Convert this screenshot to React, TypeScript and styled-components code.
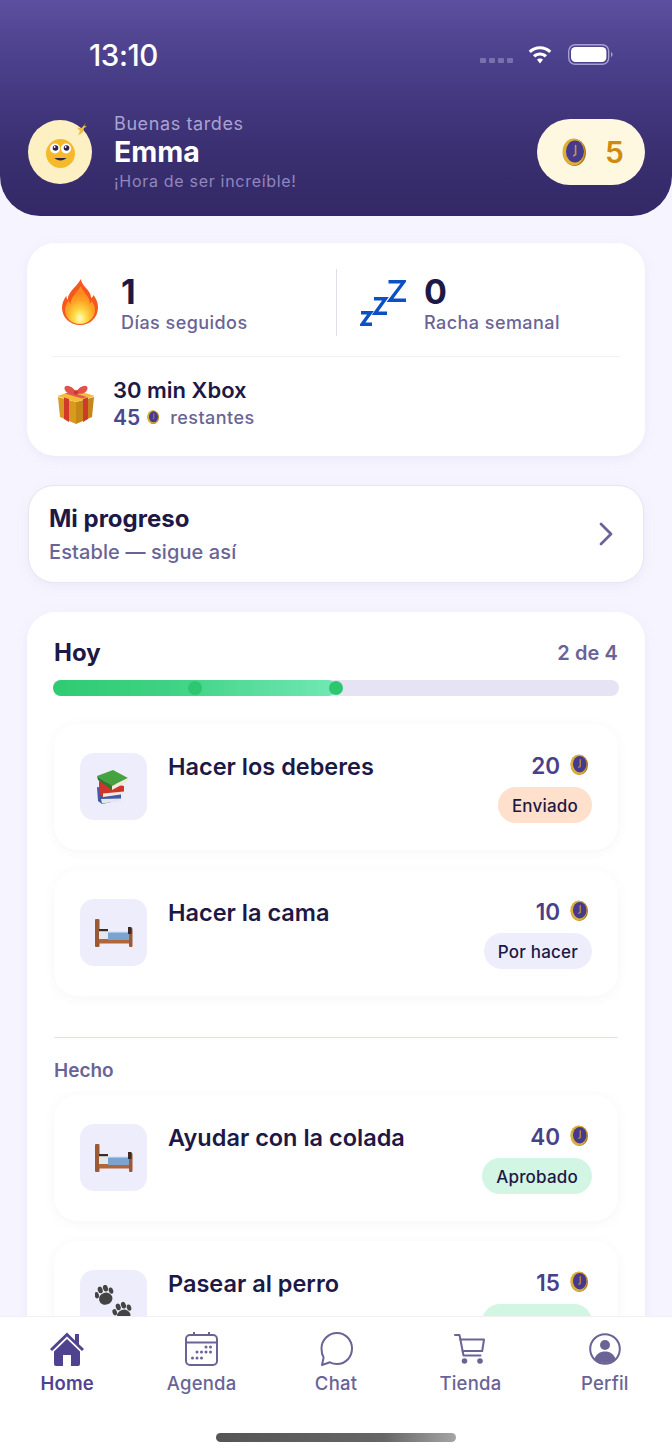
import React from "react";
import styled, { createGlobalStyle } from "styled-components";

const GlobalStyle = createGlobalStyle`
    html, body {
        margin: 0;
        padding: 0;
        background: #f6f5ff;
    }
    body {
        font-family: "Inter", "Noto Sans", sans-serif;
        color: #1d1845;
    }
`;

const Screen = styled.div`
    width: 672px;
    height: 1454px;
    display: flex;
    flex-direction: column;
    overflow: hidden;
    background: #f6f5ff;
`;

const Main = styled.div`
    flex: 1;
    min-height: 0;
    overflow: hidden;
`;

const Header = styled.header`
    height: 216px;
    box-sizing: border-box;
    padding-top: 34px;
    border-radius: 0 0 40px 40px;
    background: linear-gradient(180deg, #5c4f9f 0%, #4a3f8a 30%, #3a2f70 70%, #342966 100%);
`;

const StatusBar = styled.div`
    height: 40px;
    display: flex;
    align-items: center;
    justify-content: space-between;
    padding: 0 59px 0 89px;
`;

const Clock = styled.span`
    font-size: 29.5px;
    font-weight: 500;
    letter-spacing: -0.4px;
    padding-top: 1px;
    color: #fff;
`;

const StatusIcons = styled.div`
    display: flex;
    align-items: center;
`;

const SignalDots = styled.div`
    display: flex;
    gap: 3px;
    margin: 12px 14px 0 0;
`;

const SignalDot = styled.i`
    width: 6px;
    height: 5px;
    border-radius: 1px;
    background: #7a70ae;
`;

const Profile = styled.div`
    height: 80px;
    margin-top: 38px;
    padding: 0 27px 0 28px;
    display: flex;
    align-items: center;
`;

const Avatar = styled.div`
    width: 64px;
    height: 64px;
    margin-right: 22px;
`;

const Greeting = styled.div`
    flex: 1;
    display: flex;
    flex-direction: column;
    padding-top: 1px;
`;

const Hello = styled.span`
    font-size: 18px;
    line-height: 22px;
    letter-spacing: 0.6px;
    color: #a9a2d2;
`;

const Name = styled.span`
    font-size: 28.5px;
    line-height: 34px;
    font-weight: 700;
    color: #fff;
`;

const Tagline = styled.span`
    font-size: 16px;
    line-height: 24px;
    letter-spacing: 0.7px;
    color: #8f87bd;
`;

const CoinPill = styled.div`
    width: 108px;
    height: 66px;
    box-sizing: border-box;
    padding-left: 25px;
    display: flex;
    align-items: center;
    gap: 19px;
    border-radius: 33px;
    background: #fff8e1;
`;

const PillValue = styled.span`
    font-size: 30px;
    font-weight: 600;
    color: #d08a10;
`;

const Body = styled.div`
    padding: 27px 27px 0;
    display: flex;
    flex-direction: column;
    gap: 29px;
`;

const Card = styled.section`
    background: #fff;
    border-radius: 28px;
    box-shadow: 0 3px 14px rgba(80, 70, 160, 0.07);
`;

const StatsCard = styled(Card)`
    height: 213px;
    box-sizing: border-box;
    padding: 26px 25px 0;
`;

const StatsRow = styled.div`
    display: flex;
    height: 67px;
    padding-bottom: 20px;
    border-bottom: 1px solid #f1f0f8;
`;

const Stat = styled.div<{ $divided?: boolean }>`
    flex: ${(p) => (p.$divided ? "1" : "none")};
    width: ${(p) => (p.$divided ? "auto" : "284px")};
    box-sizing: border-box;
    display: flex;
    align-items: flex-start;
    gap: ${(p) => (p.$divided ? "18px" : "23px")};
    padding-left: ${(p) => (p.$divided ? "23px" : "10px")};
    border-left: ${(p) => (p.$divided ? "1px solid #dfdeeb" : "none")};
    svg {
        margin-top: 10px;
    }
`;

const StatText = styled.div`
    display: flex;
    flex-direction: column;
    padding-top: 3px;
`;

const StatValue = styled.span`
    font-size: 34px;
    line-height: 39px;
    font-weight: 700;
    color: #1d1845;
`;

const StatLabel = styled.span`
    font-size: 18px;
    line-height: 24px;
    font-weight: 500;
    letter-spacing: 0.45px;
    color: #6a6496;
`;

const RewardRow = styled.div`
    display: flex;
    align-items: center;
    gap: 17px;
    padding: 22px 0 0 4px;
`;

const RewardText = styled.div`
    display: flex;
    flex-direction: column;
    gap: 4px;
`;

const RewardTitle = styled.span`
    font-size: 22px;
    line-height: 22px;
    font-weight: 600;
    color: #1d1845;
`;

const RewardSub = styled.div`
    display: flex;
    align-items: center;
    height: 24px;
`;

const RewardCount = styled.span`
    font-size: 21px;
    font-weight: 600;
    color: #4f4690;
    margin-right: 7px;
`;

const RewardLeft = styled.span`
    font-size: 18px;
    font-weight: 500;
    letter-spacing: 0.45px;
    color: #6a6496;
    margin-left: 11px;
`;

const ProgressCard = styled(Card)`
    height: 98px;
    box-sizing: border-box;
    margin: 0 1px;
    padding: 0 30px 0 20px;
    display: flex;
    align-items: center;
    justify-content: space-between;
    border: 1px solid #e6e5f1;
    border-radius: 26px;
`;

const ProgressText = styled.div`
    display: flex;
    flex-direction: column;
    gap: 6px;
    padding-top: 1px;
`;

const ProgressTitle = styled.span`
    font-size: 24px;
    line-height: 28px;
    font-weight: 700;
    color: #1d1845;
`;

const ProgressSub = styled.span`
    font-size: 20px;
    line-height: 26px;
    font-weight: 500;
    letter-spacing: 0.1px;
    color: #6a6496;
`;

const TodayCard = styled(Card)`
    padding: 26px 27px 40px;
    height: 900px;
    box-sizing: border-box;
`;

const TodayHead = styled.div`
    display: flex;
    align-items: center;
    justify-content: space-between;
    height: 28px;
`;

const TodayTitle = styled.h2`
    margin: 0;
    font-size: 24px;
    font-weight: 700;
    color: #1d1845;
`;

const TodayCount = styled.span`
    font-size: 20px;
    font-weight: 600;
    letter-spacing: 0.1px;
    padding-top: 1px;
    color: #6a6496;
`;

const Bar = styled.div`
    position: relative;
    height: 16px;
    margin: 14px -1px 28px;
    border-radius: 8px;
    background: #e6e4f4;
`;

const BarFill = styled.div`
    height: 100%;
    border-radius: 8px;
    background: linear-gradient(90deg, #2fcb72 0%, #3dd283 40%, #72e8b4 100%);
`;

const BarDot = styled.i`
    position: absolute;
    top: 1px;
    width: 14px;
    height: 14px;
    margin-left: -7px;
    border-radius: 50%;
    background: #2cc76e;
`;

const Tasks = styled.div`
    display: flex;
    flex-direction: column;
    gap: 20px;
`;

const TaskRow = styled.div`
    height: 126px;
    box-sizing: border-box;
    padding: 29px 26px;
    display: flex;
    align-items: flex-start;
    border-radius: 24px;
    background: #fff;
    box-shadow: 0 2px 12px rgba(80, 70, 160, 0.05);
`;

const TaskIcon = styled.div`
    width: 67px;
    height: 67px;
    flex: none;
    display: flex;
    align-items: center;
    justify-content: center;
    border-radius: 14px;
    background: #eeedfc;
`;

const TaskTitle = styled.span`
    flex: 1;
    margin-left: 21px;
    padding-top: 1px;
    font-size: 23.5px;
    line-height: 26px;
    font-weight: 600;
    color: #1d1845;
`;

const TaskMeta = styled.div`
    display: flex;
    flex-direction: column;
    align-items: flex-end;
    gap: 10px;
`;

const TaskPoints = styled.div`
    height: 24px;
    display: flex;
    align-items: center;
    gap: 10px;
    padding-right: 4px;
    font-size: 22.5px;
    font-weight: 600;
    color: #4a4088;
`;

const tones = {
    sent: "#ffe0cc",
    todo: "#eeedfc",
    done: "#d3f5e3",
};

const Badge = styled.span<{ $tone: keyof typeof tones }>`
    height: 36px;
    box-sizing: border-box;
    padding: 2px 14px 0;
    display: flex;
    align-items: center;
    border-radius: 18px;
    font-size: 17px;
    font-weight: 500;
    letter-spacing: 0.2px;
    color: #1d1845;
    background: ${(p) => tones[p.$tone]};
`;

const Divider = styled.hr`
    margin: 41px 0 20px;
    border: none;
    border-top: 1px solid #dfdeeb;
`;

const SectionLabel = styled.div`
    font-size: 19px;
    line-height: 24px;
    font-weight: 600;
    padding-top: 1px;
    color: #6a6496;
    margin-bottom: 12px;
`;

const TabBar = styled.nav`
    height: 138px;
    flex: none;
    box-sizing: border-box;
    position: relative;
    z-index: 1;
    padding-top: 15px;
    display: flex;
    align-items: flex-start;
    background: #fff;
    border-top: 1px solid #f0eff6;
`;

const Tab = styled.div<{ $active?: boolean }>`
    flex: 1;
    display: flex;
    flex-direction: column;
    align-items: center;
    color: ${(p) => (p.$active ? "#4f4390" : "#6a6496")};
    font-size: 18.5px;
    line-height: 24px;
    font-weight: ${(p) => (p.$active ? 600 : 500)};
    letter-spacing: 0.2px;
    svg {
        height: 34px;
        margin-bottom: 5px;
    }
`;

const HomeIndicator = styled.div`
    position: absolute;
    left: 216px;
    top: 116px;
    width: 240px;
    height: 9px;
    border-radius: 5px;
    background: linear-gradient(90deg, #555 0%, #666 70%, #a5a5a5 100%);
`;

function Coin({ size = 24 }: { size?: number }) {
    return (
        <svg width={size} height={size * 1.17} viewBox="0 0 24 28">
            <ellipse cx="12.500" cy="14.500" rx="11.500" ry="13.500" fill="#a77a18" />
            <ellipse cx="11.500" cy="14" rx="11" ry="13.500" fill="#dcae3a" />
            <ellipse cx="13" cy="13.500" rx="9" ry="11" fill="#463a8e" />
            <path d="M13.600 7.500v9l-1.800 1.200" stroke="#c9963a" strokeWidth="1.600" fill="none" strokeLinecap="round" />
        </svg>
    );
}

function Wifi() {
    return (
        <svg width="26" height="22" viewBox="0 0 26 22">
            <path d="M13 3.200c4.400 0 8.400 1.700 11.300 4.500L22.200 10c-2.400-2.300-5.600-3.700-9.200-3.700S6.200 7.700 3.800 10L1.700 7.700C4.600 4.900 8.600 3.200 13 3.200z" fill="#fff" />
            <path d="M13 9.400c2.700 0 5.100 1 7 2.800l-2.200 2.300c-1.300-1.200-3-2-4.800-2s-3.500.8-4.800 2L6 12.200c1.900-1.800 4.300-2.800 7-2.800z" fill="#fff" />
            <path d="M13 15.400c1.200 0 2.300.5 3.100 1.200L13 20.400l-3.100-3.800c.8-.7 1.900-1.200 3.100-1.200z" fill="#fff" />
        </svg>
    );
}

function Battery() {
    return (
        <svg width="45" height="21" viewBox="0 0 45 21" style={{ marginLeft: 15 }}>
            <rect x="0.700" y="0.700" width="40" height="19.600" rx="6.500" fill="none" stroke="#a79fd0" strokeWidth="1.400" />
            <rect x="3" y="3" width="35.400" height="15" rx="4.500" fill="#fff" />
            <path d="M43 8v5c1-.4 1.600-1.400 1.600-2.500S44 8.400 43 8z" fill="#a79fd0" />
        </svg>
    );
}

function Smiley() {
    return (
        <svg width="64" height="64" viewBox="0 0 64 64">
            <circle cx="32" cy="32" r="32" fill="#fdf1c4" />
            <circle cx="32.500" cy="33.500" r="14.500" fill="#f6b92c" />
            <circle cx="27" cy="28.500" r="5" fill="#fff" />
            <circle cx="38" cy="28.500" r="5" fill="#fff" />
            <circle cx="27.500" cy="28" r="2.800" fill="#2b2450" />
            <circle cx="38.500" cy="28" r="2.800" fill="#2b2450" />
            <circle cx="26.600" cy="27" r="0.900" fill="#fff" />
            <circle cx="37.600" cy="27" r="0.900" fill="#fff" />
            <path d="M26.500 38c3 3.200 9 3.200 12 0z" fill="#2b2450" />
            <path d="M58 3l-4.500 5 -4.500-.2 3 3.200-2 4.500 5-3.200 1-4.300 3-1.500-2.700-.6z" fill="#edbd45" />
        </svg>
    );
}

function Flame() {
    return (
        <svg width="36" height="46" viewBox="0 0 36 46">
            <defs>
                <radialGradient id="flameCore" cx="50%" cy="85%" r="65%">
                    <stop offset="0%" stopColor="#fffbd0" />
                    <stop offset="30%" stopColor="#ffdf4a" />
                    <stop offset="70%" stopColor="#ffa726" />
                    <stop offset="100%" stopColor="#ff8a1e" />
                </radialGradient>
            </defs>
            <path
                d="M19 0c.5 5 4.500 8 7.500 12 1.600 2.200 2.500 4.500 2.700 7 1.200-.6 1.900-1.500 2.200-3 2.800 3.500 4.600 7.700 4.600 12.200C36 38.500 28 46 18 46S0 38.500 0 28.500c0-4.500 2-8.500 4.500-12-.2 1.700.1 3 1.100 4.300C6 12.500 14.500 8 19 0z"
                fill="#f4581f"
            />
            <path
                d="M19 7c1 4.500 5 7.500 7.500 12 1 2 1.300 3.800 1.200 5.500 1-.6 1.700-1.300 2.100-2.400 1.800 2.400 3.200 5.400 3.200 8.400C33 38.800 26.300 45 18 45S3 38.800 3 31c0-4 1.800-7 4-9.500.1 1.500.5 2.600 1.500 3.500C9 17.500 15.500 13 19 7z"
                fill="url(#flameCore)"
            />
        </svg>
    );
}

function Sleep() {
    return (
        <svg width="46" height="47" viewBox="0 0 46 47" style={{ marginTop: 10 }}>
            <g fill="none" stroke="#0b50c4" strokeWidth="3.400" strokeLinejoin="miter">
                <path d="M28.500 2.700h15.500L30 21.300h16" />
                <path d="M14 19.700h11.500L15 34.300h12" />
                <path d="M1 33.700h9.500L2 45.300h10" />
            </g>
        </svg>
    );
}

function Gift() {
    return (
        <svg width="40" height="40" viewBox="0 0 40 40">
            <path d="M2 13l18 5v22L4 33z" fill="#d99a1e" />
            <path d="M38 13l-18 5v22l16-7z" fill="#c5861a" />
            <path d="M1 12L20 6l19 6-19 6z" fill="#f2bd3a" />
            <path d="M8 13.500l5 1.500v23l-5-3zM27 15l5-1.500v21.500l-5 3z" fill="#cf3a2a" />
            <path d="M9 9.500l5-1.500 17 5-5 1.600z" fill="#e8584e" />
            <path d="M20 8C16 1 8 0 8.500 4.500 9 9.500 16 11 20 9c4 2 11 .5 11.500-4.500C32 0 24 1 20 8z" fill="#e4504a" />
            <circle cx="20" cy="8.500" r="2.200" fill="#c53a34" />
        </svg>
    );
}

function Books() {
    return (
        <svg width="32" height="34" viewBox="0 0 32 34" style={{ marginRight: 3 }}>
            <path d="M1 17l24 4.500v8.500L6 34l-4-3z" fill="#3f5aa8" />
            <path d="M5 29l20-.5V31L6 33.500z" fill="#e6e6ee" />
            <path d="M3 11l25 5v7.500L7 27l-4-3.500z" fill="#cf352b" />
            <path d="M7 23.500l21-2v2.500L7 27z" fill="#f4ebe2" />
            <path d="M1 6L17 0l15 8-16 8z" fill="#45a33f" />
            <path d="M1 6l15 10v4L2 10z" fill="#2c7a2b" />
            <path d="M16 16l16-8v3.500L16 20z" fill="#efeadb" />
        </svg>
    );
}

function Bed() {
    return (
        <svg width="38" height="28" viewBox="0 0 38 28">
            <rect x="0" y="0" width="4.500" height="28" rx="1" fill="#9c5a34" />
            <rect x="34" y="9" width="3.500" height="19" rx="1" fill="#9c5a34" />
            <rect x="4" y="20" width="30" height="4.500" fill="#b0653a" />
            <path d="M4 12h10v8H4z" fill="#e3e7ef" />
            <path d="M13 12.500h21V21H13z" fill="#7ba3cf" />
            <path d="M13 12h21v1.500H13z" fill="#dbe6f2" />
            <rect x="4" y="10" width="9" height="2.200" fill="#3d2a22" />
            <rect x="33" y="8" width="3.500" height="7" fill="#3d2a22" />
        </svg>
    );
}

function Paw({ x, y }: { x: number; y: number }) {
    return (
        <g transform={`translate(${x} ${y}) rotate(-18 9 9)`} fill="#444">
            <ellipse cx="9.500" cy="13" rx="6.800" ry="6" />
            <ellipse cx="2" cy="7" rx="2.200" ry="3.200" />
            <ellipse cx="7" cy="3" rx="2.400" ry="3.400" />
            <ellipse cx="12.500" cy="3" rx="2.400" ry="3.400" />
            <ellipse cx="17" cy="7" rx="2.200" ry="3.200" />
        </g>
    );
}

function Paws() {
    return (
        <svg width="38" height="38" viewBox="0 0 38 38">
            <Paw x={0} y={1} />
            <Paw x={18} y={18} />
        </svg>
    );
}

function HomeIcon() {
    return (
        <svg width="36" height="34" viewBox="0 0 36 34" fill="currentColor">
            <path d="M18 0.500L1 17l2 2L18 4.500 33 19l2-2-5-4.800V2h-4v6.400z" />
            <path d="M5 19.500L18 7l13 12.500V32a2 2 0 0 1-2 2h-7V23h-8v11H7a2 2 0 0 1-2-2z" />
        </svg>
    );
}

function CalendarIcon() {
    const dots = [
        [21, 15], [25.500, 15],
        [12, 20], [16.500, 20], [21, 20], [25.500, 20],
        [7.500, 26], [12, 26], [16.500, 26],
    ];
    return (
        <svg width="33" height="34" viewBox="0 0 33 34" fill="none" stroke="currentColor" strokeWidth="2">
            <rect x="1" y="3" width="31" height="30" rx="4" />
            <path d="M1 10.500h31M9 0v4M24 0v4" />
            {dots.map(([cx, cy]) => (
                <circle key={`${cx}-${cy}`} cx={cx} cy={cy} r="1.500" fill="currentColor" stroke="none" />
            ))}
        </svg>
    );
}

function ChatIcon() {
    return (
        <svg width="33" height="34" viewBox="0 0 33 34" fill="none" stroke="currentColor" strokeWidth="2" strokeLinejoin="round">
            <path d="M17 1c8.500 0 15 7 15 15.500S25.500 32 17 32c-2.500 0-5-.6-7-1.700L2 33l1.600-7.500C2 23 1.500 19.500 1.500 16.500 1.500 8 8.500 1 17 1z" />
        </svg>
    );
}

function CartIcon() {
    return (
        <svg width="32" height="34" viewBox="0 0 32 34" fill="none" stroke="currentColor" strokeWidth="2" strokeLinecap="round" strokeLinejoin="round">
            <path d="M1 3h4.500l4 20.500h17" />
            <path d="M6.300 7.500H30l-1.800 11.500H8.600" />
            <circle cx="10.500" cy="29" r="1.800" fill="currentColor" />
            <circle cx="26" cy="29" r="1.800" fill="currentColor" />
        </svg>
    );
}

function ProfileIcon() {
    return (
        <svg width="32" height="34" viewBox="0 0 32 32" fill="none" stroke="currentColor" strokeWidth="2">
            <circle cx="16" cy="16" r="14.800" />
            <circle cx="16" cy="12" r="5" fill="currentColor" stroke="none" />
            <path d="M5.500 26c1.500-5 5.500-7.500 10.500-7.500S25 21 26.500 26c-3 2.800-6.500 4-10.500 4s-8-1.200-10.500-4z" fill="currentColor" stroke="none" />
        </svg>
    );
}

const openTasks = [
    { title: "Hacer los deberes", points: 20, status: "Enviado", tone: "sent" as const, icon: <Books /> },
    { title: "Hacer la cama", points: 10, status: "Por hacer", tone: "todo" as const, icon: <Bed /> },
];

const doneTasks = [
    { title: "Ayudar con la colada", points: 40, status: "Aprobado", tone: "done" as const, icon: <Bed /> },
    { title: "Pasear al perro", points: 15, status: "Aprobado", tone: "done" as const, icon: <Paws /> },
];

type Task = (typeof openTasks)[number] | (typeof doneTasks)[number];

function TaskItem({ task }: { task: Task }) {
    return (
        <TaskRow>
            <TaskIcon>{task.icon}</TaskIcon>
            <TaskTitle>{task.title}</TaskTitle>
            <TaskMeta>
                <TaskPoints>
                    {task.points}
                    <Coin size={18} />
                </TaskPoints>
                <Badge $tone={task.tone}>{task.status}</Badge>
            </TaskMeta>
        </TaskRow>
    );
}

export default function App() {
    return (
        <Screen>
            <GlobalStyle />
            <Main>
                <Header>
                    <StatusBar>
                        <Clock>13:10</Clock>
                        <StatusIcons>
                            <SignalDots>
                                <SignalDot />
                                <SignalDot />
                                <SignalDot />
                                <SignalDot />
                            </SignalDots>
                            <Wifi />
                            <Battery />
                        </StatusIcons>
                    </StatusBar>
                    <Profile>
                        <Avatar>
                            <Smiley />
                        </Avatar>
                        <Greeting>
                            <Hello>Buenas tardes</Hello>
                            <Name>Emma</Name>
                            <Tagline>¡Hora de ser increíble!</Tagline>
                        </Greeting>
                        <CoinPill>
                            <Coin />
                            <PillValue>5</PillValue>
                        </CoinPill>
                    </Profile>
                </Header>
                <Body>
                    <StatsCard>
                        <StatsRow>
                            <Stat>
                                <Flame />
                                <StatText>
                                    <StatValue>1</StatValue>
                                    <StatLabel>Días seguidos</StatLabel>
                                </StatText>
                            </Stat>
                            <Stat $divided>
                                <Sleep />
                                <StatText>
                                    <StatValue>0</StatValue>
                                    <StatLabel>Racha semanal</StatLabel>
                                </StatText>
                            </Stat>
                        </StatsRow>
                        <RewardRow>
                            <Gift />
                            <RewardText>
                                <RewardTitle>30 min Xbox</RewardTitle>
                                <RewardSub>
                                    <RewardCount>45</RewardCount>
                                    <Coin size={12} />
                                    <RewardLeft>restantes</RewardLeft>
                                </RewardSub>
                            </RewardText>
                        </RewardRow>
                    </StatsCard>
                    <ProgressCard>
                        <ProgressText>
                            <ProgressTitle>Mi progreso</ProgressTitle>
                            <ProgressSub>Estable — sigue así</ProgressSub>
                        </ProgressText>
                        <svg width="14" height="24" viewBox="0 0 14 24" fill="none" stroke="#6a6496" strokeWidth="2.800" strokeLinecap="round" strokeLinejoin="round">
                            <path d="M2 2l10 10L2 22" />
                        </svg>
                    </ProgressCard>
                    <TodayCard>
                        <TodayHead>
                            <TodayTitle>Hoy</TodayTitle>
                            <TodayCount>2 de 4</TodayCount>
                        </TodayHead>
                        <Bar>
                            <BarFill style={{ width: "50%" }} />
                            <BarDot style={{ left: "25%" }} />
                            <BarDot style={{ left: "50%" }} />
                        </Bar>
                        <Tasks>
                            {openTasks.map((t) => (
                                <TaskItem key={t.title} task={t} />
                            ))}
                        </Tasks>
                        <Divider />
                        <SectionLabel>Hecho</SectionLabel>
                        <Tasks>
                            {doneTasks.map((t) => (
                                <TaskItem key={t.title} task={t} />
                            ))}
                        </Tasks>
                    </TodayCard>
                </Body>
            </Main>
            <TabBar>
                <Tab $active>
                    <HomeIcon />
                    Home
                </Tab>
                <Tab>
                    <CalendarIcon />
                    Agenda
                </Tab>
                <Tab>
                    <ChatIcon />
                    Chat
                </Tab>
                <Tab>
                    <CartIcon />
                    Tienda
                </Tab>
                <Tab>
                    <ProfileIcon />
                    Perfil
                </Tab>
                <HomeIndicator />
            </TabBar>
        </Screen>
    );
}
